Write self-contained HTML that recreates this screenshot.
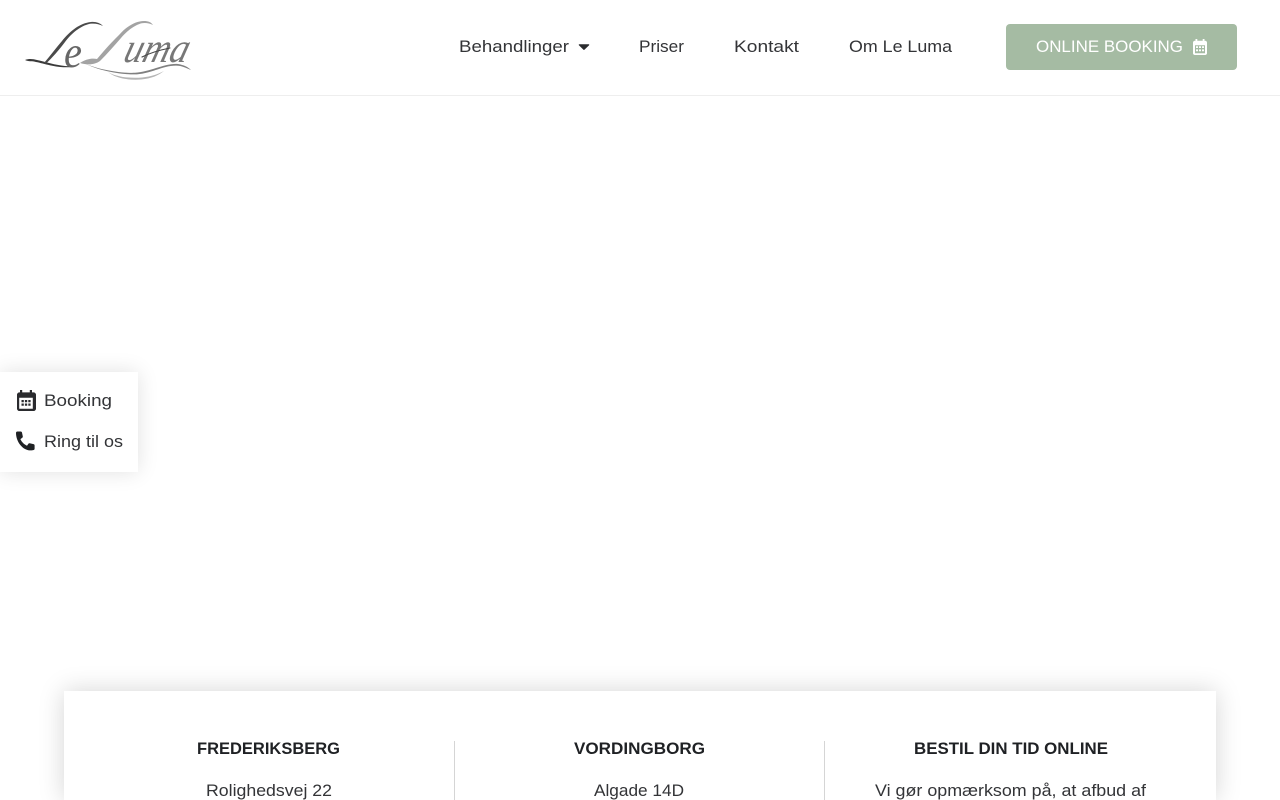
<!DOCTYPE html>
<html lang="da">
<head>
<meta charset="utf-8">
<title>Le Luma</title>
<style>
html,body{margin:0;padding:0;width:1280px;height:800px;overflow:hidden;background:#fff}
#wrap{position:relative;width:1280px;height:800px;overflow:hidden;background:#fff}
#hdr{position:absolute;left:0;top:0;width:1280px;height:95px;border-bottom:1px solid #eeeeee;background:#fff}
#btn{position:absolute;left:1006px;top:24px;width:231px;height:46px;background:#a5bba3;border-radius:4px}
#side{position:absolute;left:0;top:372px;width:138px;height:100px;background:#fff;box-shadow:0 0 20px rgba(0,0,0,.12)}
#card{position:absolute;left:64px;top:691px;width:1152px;height:109px;background:#fff;box-shadow:0 0 24px rgba(0,0,0,.17)}
.d{position:absolute;top:741px;width:1px;height:59px;background:#d5d5d5}
svg{position:absolute;left:0;top:0}
text{font-family:"Liberation Sans",sans-serif;font-size:17px;fill:#333437}
.b{font-weight:700;fill:#1f2124}
.lg{font-family:"Liberation Serif",serif;font-style:italic}
</style>
</head>
<body>
<div id="wrap">
<div id="hdr"></div>
<div id="btn"></div>
<div id="side"></div>
<div id="card"></div>
<div class="d" style="left:454px"></div>
<div class="d" style="left:824px"></div>
<svg width="1280" height="800" viewBox="0 0 1280 800" xmlns="http://www.w3.org/2000/svg">
  <!-- logo -->
  <path fill="#3a3a3a" d="M25 60C29 58.500 33 59 37 60C46 62 55 65 65 66C70 66.500 74 66.500 77 66C72 67.500 66 67.500 60 67C50 66 38 62 32 61.300C29 61.300 27 61 25 60Z"/>
  <path fill="#4a4a4a" d="M44 63C50 56 56 48 62 41C70 31 80 23 91 22C96 21.600 100 23 103 26C99 24 95 23.300 90 23.800C80 26 71 34 65 42C59 50 52 58 46 63.500Z"/>
  <text class="lg" x="64" y="67" textLength="18" lengthAdjust="spacingAndGlyphs" style="font-size:44px;fill:#666">e</text>
  <path fill="#a3a3a3" d="M80 63C86 59 92 58 97 59L103 52C109 45 114 40 119 35C126 27 135 21 144 21C148 21 151 22 153 25C149 23 145 22.600 141 23.400C133 26 126 32 121 38C114 46 107 54 100 61C95 64.500 88 65.500 80 63Z"/>
  <g transform="translate(122 62) skewX(-16)">
    <text class="lg" x="0" y="0" textLength="64" lengthAdjust="spacingAndGlyphs" style="font-size:42px;fill:#777">uma</text>
  </g>
  <path fill="none" stroke="#444" stroke-width="1.100" stroke-linecap="round" d="M142 57C150 53 160 50 170 48"/>
  <path fill="#808080" d="M82 62C92 68 118 73.500 135 72.800C150 72 165 63 178 64C184 65 188 67 191 70C186 68 182 65.600 176 65.600C162 65.600 150 74.400 134 74.400C118 74.400 96 70 82 62Z"/>
  <path fill="#b5b5b5" d="M108 72C116 77 130 78.500 142 77.500C152 76.500 158 74 164 71C158 75.500 152 78.500 141 79.500C128 80.500 115 78 108 72Z"/>

  <!-- nav -->
  <text x="459" y="52" textLength="110" lengthAdjust="spacingAndGlyphs">Behandlinger</text>
  <path d="M579.300 44.200h9.400c.5 0 .8.6.4 1l-4.700 4.600c-.3.3-.6.3-.9 0l-4.600-4.600c-.4-.4-.1-1 .4-1z" fill="#2a2b2e"/>
  <text x="639" y="52" textLength="45" lengthAdjust="spacingAndGlyphs">Priser</text>
  <text x="734" y="52" textLength="65" lengthAdjust="spacingAndGlyphs">Kontakt</text>
  <text x="849" y="52" textLength="103" lengthAdjust="spacingAndGlyphs">Om Le Luma</text>

  <!-- button -->
  <text x="1036" y="52" textLength="147" lengthAdjust="spacingAndGlyphs" style="fill:#fff">ONLINE BOOKING</text>
  <path fill="#fff" fill-rule="evenodd" d="M1195.500 39h1.800v1.800h5.400V39h1.800v1.800h.6c1 0 1.900.8 1.900 1.800v10.600c0 1-.9 1.800-1.900 1.800h-10.200c-1 0-1.900-.8-1.900-1.800V42.600c0-1 .9-1.800 1.900-1.800h.6zM1195 45.200v8h10v-8zM1196 46.200h2v1.800h-2zM1199 46.200h2v1.800h-2zM1202 46.200h2v1.800h-2zM1196 49.400h2v1.800h-2zM1199 49.400h2v1.800h-2zM1202 49.400h2v1.800h-2z"/>

  <!-- side -->
  <path fill="#2a2b2e" fill-rule="evenodd" d="M20 390h2.200v2.400h7.600V390H32v2.400h1.600c1.300 0 2.400 1.100 2.400 2.400v13.800c0 1.300-1.100 2.400-2.400 2.400H19.400c-1.300 0-2.400-1.100-2.400-2.400V394.800c0-1.300 1.100-2.400 2.400-2.400H20zM19.200 397.800v11h13.600v-11zM21.500 400h2.300v2.200h-2.300zM24.900 400h2.300v2.200h-2.300zM28.300 400h2.300v2.200h-2.300zM21.500 403.500h2.300v2.200h-2.300zM24.900 403.500h2.300v2.200h-2.300zM28.300 403.500h2.300v2.200h-2.300z"/>
  <text x="44" y="406" textLength="68" lengthAdjust="spacingAndGlyphs">Booking</text>
  <path fill="#1f2124" d="M16 432.600c0-.9.600-1.500 1.400-1.500h3.300c.7 0 1.200.5 1.300 1.100l.8 3.800c.1.500-.1 1-.5 1.300l-1.900 1.400c1.300 2.900 3.700 5.300 6.600 6.600l1.400-1.900c.3-.4.800-.6 1.300-.5l3.800.8c.6.1 1.100.6 1.100 1.300v3.300c0 .8-.6 1.400-1.500 1.400C23.900 452 16 441.900 16 432.600z" transform="translate(0 .4)"/>
  <text x="44" y="447" textLength="79" lengthAdjust="spacingAndGlyphs">Ring til os</text>

  <!-- card text -->
  <text class="b" x="197" y="754" textLength="143" lengthAdjust="spacingAndGlyphs">FREDERIKSBERG</text>
  <text x="206" y="796" textLength="126" lengthAdjust="spacingAndGlyphs">Rolighedsvej 22</text>
  <text class="b" x="574" y="754" textLength="131" lengthAdjust="spacingAndGlyphs">VORDINGBORG</text>
  <text x="594" y="796" textLength="90" lengthAdjust="spacingAndGlyphs">Algade 14D</text>
  <text class="b" x="914" y="754" textLength="194" lengthAdjust="spacingAndGlyphs">BESTIL DIN TID ONLINE</text>
  <text x="875" y="796" textLength="271" lengthAdjust="spacingAndGlyphs">Vi gør opmærksom på, at afbud af</text>
</svg>
</div>
</body>
</html>
